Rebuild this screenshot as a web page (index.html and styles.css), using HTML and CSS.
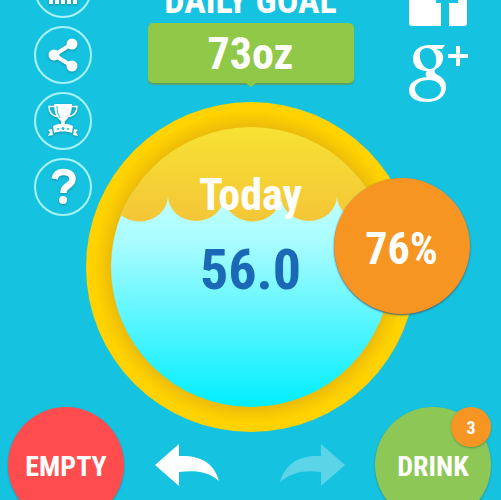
FILE: index.html
```html
<!DOCTYPE html>
<html lang="en">
<head>
<meta charset="utf-8">
<meta name="viewport" content="width=device-width, initial-scale=1">
<title>Daily water</title>
<link rel="stylesheet" href="styles.css">
</head>
<body>
<div class="app">
  <main class="board">
    <nav class="rail" aria-label="Tools">
      <button class="tool" type="button" aria-label="Statistics">
        <svg viewBox="0 0 58 58"><path fill="#fff" d="M15 24h28v6H15zM15 31h4v13h-4zM21 28h4v16h-4zM27 30h4v14h-4zM33 28h4v16h-4zM39 30h4v14h-4z"/></svg>
      </button>
      <button class="tool" type="button" aria-label="Share">
        <svg viewBox="0 0 58 58"><g fill="#fff"><path fill="none" stroke="#fff" stroke-width="4" d="M38 18 20 29l18 11"/><circle cx="38" cy="18" r="5.500"/><circle cx="20" cy="29" r="5.500"/><circle cx="38" cy="40" r="5.500"/></g></svg>
      </button>
      <button class="tool" type="button" aria-label="Awards">
        <svg viewBox="0 0 58 58">
          <path fill="#fff" d="M20 12h18c0 9-3 14-7 17v3h-4v-3c-4-3-7-8-7-17z"/>
          <path fill="none" stroke="#fff" stroke-width="1.500" d="M20 14.500h-5c0 6 3 9 8 10M38 14.500h5c0 6-3 9-8 10"/>
          <path fill="none" stroke="#15c2df" stroke-width="1" d="M23 14c0 5 1 9 3 12"/>
          <path fill="#fff" d="M19 34c6-3 14-3 20 0l-1 7c-5-2-13-2-18 0zM18 37l-4 1 2 2-2 4 5-1zM40 37l4 1-2 2 2 4-5-1z"/>
          <g fill="#15c2df"><circle cx="24" cy="37" r="1"/><circle cx="29" cy="36.500" r="1.500"/><circle cx="34" cy="37" r="1"/></g>
        </svg>
      </button>
      <button class="tool" type="button" aria-label="Help">
        <svg viewBox="0 0 58 58"><path fill="none" stroke="#fff" stroke-width="6.500" d="M20.500 21c1-5 4-7 9-7 6 0 9 3 9 7 0 7-9 6-9 13v1"/><circle cx="29" cy="42" r="4" fill="#fff"/></svg>
      </button>
    </nav>

    <section class="goal">
      <h1 class="goal-title">DAILY GOAL</h1>
      <button class="goal-value" type="button">73oz</button>
      <div class="dial">
        <svg class="dial-art" viewBox="0 0 330 330" aria-hidden="true">
          <defs>
            <radialGradient id="ring" gradientUnits="userSpaceOnUse" cx="165" cy="165" r="165">
              <stop offset=".84" stop-color="#e9b90c"/><stop offset=".89" stop-color="#f5c605"/><stop offset=".95" stop-color="#ffd200"/>
            </radialGradient>
            <linearGradient id="sky" gradientUnits="userSpaceOnUse" x1="0" y1="25" x2="0" y2="120">
              <stop offset="0" stop-color="#f7e232"/><stop offset="1" stop-color="#f4c538"/>
            </linearGradient>
            <linearGradient id="water" gradientUnits="userSpaceOnUse" x1="0" y1="95" x2="0" y2="305">
              <stop offset="0" stop-color="#c0ffff"/><stop offset=".22" stop-color="#a8fcff"/><stop offset="1" stop-color="#00eeff"/>
            </linearGradient>
            <clipPath id="bowl"><circle cx="165" cy="165" r="140"/></clipPath>
          </defs>
          <circle cx="165" cy="165" r="165" fill="url(#ring)"/>
          <g clip-path="url(#bowl)">
            <path fill="url(#water)" d="M0 90h330v240H0z"/>
            <path fill="url(#sky)" d="M0 0h330v94h-23a28 25 0 0 1-56 0a28 25 0 0 1-56 0a28 25 0 0 1-57 0a28 25 0 0 1-56 0a28 25 0 0 1-57 0H0z"/>
          </g>
        </svg>
        <div class="dial-text">
          <h2 class="dial-label">Today</h2>
          <p class="dial-amount">56.0</p>
        </div>
        <div class="percent">76%</div>
      </div>
    </section>

    <aside class="social" aria-label="Social">
      <a href="#facebook" aria-label="Facebook">
        <svg class="logo" viewBox="0 0 60 60"><path fill="#fff" d="M4 0h52q3 0 3 3v54q0 3-3 3H41V37h9l1-9H41v-6q0-4 4-4h6v-9h-8q-10 0-10 11v8h-5v9h5v23H4q-3 0-3-3V3q0-3 3-3z"/></svg>
      </a>
      <a href="#google-plus" aria-label="Google Plus">
        <svg class="logo" viewBox="0 0 60 60"><g fill="#fff" fill-rule="evenodd">
          <path d="M37 1 34 5H28Q36 8 35 15Q34 22 28 25Q25 27 28 30Q38 34 38 43C38 53 29 58 19 58C8 58 1 54 1 46C1 38 9 34 19 33Q16 30 19 27C10 27 5 22 5 15C5 5 13 1 22 1zM19 4C13 4 11 9 12 14C13 20 17 25 22 25C27 25 29 20 28 14C27 8 24 4 19 4zM21 36C12 36 7 40 7 45C7 51 13 55 20 55C28 55 33 51 33 45C33 40 28 36 21 36z"/>
          <path d="M48 2h4v8h8v4h-8v8h-4v-8h-8v-4h8z"/>
        </g></svg>
      </a>
    </aside>
  </main>

  <footer class="actions">
    <button class="round empty" type="button">EMPTY</button>
    <div class="history">
      <button class="step" type="button" aria-label="Undo"><svg viewBox="0 0 65 42"><path fill="#fff" d="M0 21 24 0v12C44 11 59 18 64 37 53 27 40 26 24 28v14z"/></svg></button>
      <button class="step redo" type="button" aria-label="Redo"><svg viewBox="0 0 65 42"><path fill="#fff" d="M65 21 41 0v12C21 11 6 18 0 38 12 28 25 26 41 28v14z"/></svg></button>
    </div>
    <button class="round drink" type="button">DRINK<span class="count">3</span></button>
  </footer>
</div>
</body>
</html>
```
FILE: styles.css
```css
* { box-sizing: border-box; }

body {
  margin: 0;
  background: #15c2df;
  color: #fff;
  font-family: "Roboto Condensed", "Liberation Sans Narrow", Roboto, sans-serif;
  font-weight: 700;
}

button {
  border: 0;
  padding: 0;
  background: none;
  color: inherit;
  font: inherit;
}

h1, h2, p { margin: 0; font-weight: 700; }
svg { display: block; width: 100%; }

.app { height: 100vh; overflow: hidden; }

.board {
  display: grid;
  grid-template-columns: minmax(0, 1fr) 330px minmax(0, 1fr);
  align-items: start;
}

.rail {
  display: flex;
  flex-direction: column;
  gap: 8px;
  margin-top: -40px;
  padding-left: 34px;
}

.tool {
  width: 58px;
  height: 58px;
  border: 2px solid #a9f3fb;
  border-radius: 50%;
}

.tool svg {
  width: 58px;
  margin: -2px;
  filter: drop-shadow(0 1px 1px #0b6f8599);
}

.goal {
  display: flex;
  flex-direction: column;
  align-items: center;
}

.goal-title {
  margin-top: -20px;
  font-size: 36px;
  line-height: 43px;
}

.goal-value {
  position: relative;
  width: 206px;
  height: 60px;
  border-radius: 5px;
  background: #90c847;
  box-shadow: 0 2px 1px #5a9f6c;
  font-size: 44px;
  line-height: 62px;
}

.goal-value::after {
  content: "";
  position: absolute;
  top: 100%;
  left: 50%;
  margin-left: -5px;
  border: 5px solid transparent;
  border-top: 4px solid #90c847;
  border-bottom: 0;
}

.dial {
  position: relative;
  display: grid;
  width: 100%;
  margin-top: 19px;
}

.dial-art, .dial-text { grid-area: 1 / 1; }

.dial-text {
  padding-top: 66px;
  text-align: center;
}

.dial-label { font-size: 44px; line-height: 54px; }
.dial-amount { margin-top: 14px; color: #1b69b6; font-size: 56px; line-height: 68px; }

.percent {
  position: absolute;
  top: 76px;
  right: -54px;
  width: 136px;
  height: 136px;
  border-radius: 50%;
  background: #f79523;
  box-shadow: 0 1px 2px #35607b;
  font-size: 44px;
  line-height: 142px;
  text-align: center;
}

.social {
  display: flex;
  flex-direction: column;
  align-items: flex-end;
  gap: 18px;
  margin-top: -34px;
  padding-right: 33px;
}

.logo { width: 60px; }

.actions {
  position: relative;
  display: flex;
  align-items: center;
  justify-content: space-between;
  margin-top: -25px;
  padding: 0 10px 0 8px;
}

.round {
  position: relative;
  width: 116px;
  height: 116px;
  padding-top: 4px;
  border-radius: 50%;
  box-shadow: 0 1px 2px #2a889c;
  font-size: 28px;
  line-height: 34px;
}

.round.empty { background: #ff4c4f; }
.round.drink { background: #8dc857; }

.history { display: flex; gap: 60px; }
.step { width: 65px; }
.redo { opacity: .3; }

.count {
  position: absolute;
  top: 0;
  right: 0;
  width: 40px;
  height: 40px;
  border-radius: 50%;
  background: #f79523;
  box-shadow: 0 1px 2px #55994e;
  font-size: 18px;
  line-height: 42px;
}
```
